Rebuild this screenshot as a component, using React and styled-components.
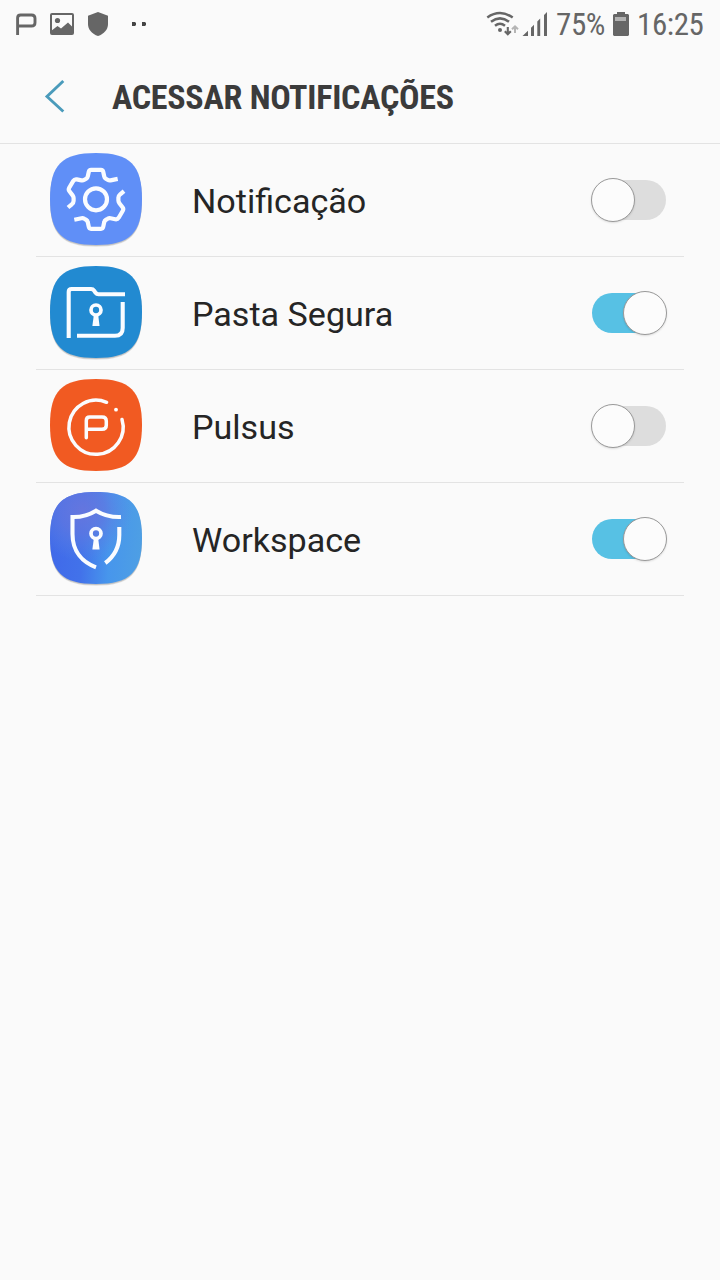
import React from "react";
import styled, { createGlobalStyle } from "styled-components";

const GlobalStyle = createGlobalStyle`
  * { box-sizing: border-box; }
  body { margin: 0; background: #fafafa; font-family: Roboto, "Liberation Sans", sans-serif; }
`;

const Screen = styled.main`
  width: 720px;
  min-height: 1280px;
  background: #fafafa;
`;

const StatusBar = styled.div`
  display: flex;
  justify-content: space-between;
  height: 48px;
  color: #666;
`;

const StatusGroup = styled.div`
  display: flex;
  height: 48px;
`;

const StatusText = styled.span`
  width: ${(p) => p.$width}px;
  font-family: "Roboto Condensed", Roboto, sans-serif;
  font-stretch: 75%;
  font-size: 31px;
  letter-spacing: -0.4px;
  line-height: 50px;
  white-space: nowrap;
`;

const Header = styled.header`
  display: flex;
  align-items: center;
  height: 96px;
  padding-left: 40px;
  border-bottom: 1px solid #e3e3e3;
`;

const BackButton = styled.button`
  display: flex;
  width: 72px;
  padding: 0;
  border: 0;
  background: none;
`;

const Title = styled.h1`
  margin: 0;
  padding-top: 3px;
  color: #3b3b3b;
  font-family: "Roboto Condensed", Roboto, sans-serif;
  font-stretch: 75%;
  font-size: 34px;
  font-weight: 700;
  letter-spacing: -0.25px;
  line-height: 44px;
  white-space: nowrap;
`;

const List = styled.ul`
  margin: 0 36px;
  padding: 0;
  list-style: none;
`;

const Row = styled.li`
  display: flex;
  height: 113px;
  padding: 0 17px 0 4px;
  border-bottom: 1px solid #e3e3e3;
`;

const AppIcon = styled.svg`
  flex: none;
  width: 112px;
  height: 112px;
  fill: none;
  stroke: #fafcff;
`;

const Label = styled.span`
  flex: 1;
  padding-left: 40px;
  color: #252525;
  font-size: 34.1px;
  line-height: 115px;
`;

const Switch = styled.button`
  display: flex;
  align-items: center;
  width: 76px;
  height: 44px;
  margin-top: 34px;
  padding: 0;
  border: 0;
  background: none;
`;

const Track = styled.span`
  display: flex;
  align-items: center;
  justify-content: ${(p) => (p.$on ? "flex-end" : "flex-start")};
  width: 74px;
  height: 40px;
  margin: 0 1px;
  border-radius: 20px;
  background: ${(p) => (p.$on ? "#57c1e4" : "#dddddd")};
`;

const Thumb = styled.span`
  flex: none;
  width: 44px;
  height: 44px;
  margin: 0 -1px;
  border: 1px solid #999;
  border-radius: 50%;
  background: #fcfcfc;
  box-shadow: 0 1px 2px rgba(0, 0, 0, 0.12);
`;

const Squircle = ({ fill, shadow = true }) => {
  const d = "M56 9C90 9 102 21 102 55S90 101 56 101 10 89 10 55 22 9 56 9Z";
  return (
    <g stroke="none">
      {shadow && <path d={d} transform="translate(0 1.8)" fill="#000" opacity=".1" />}
      {shadow && <path d={d} transform="translate(0 1)" fill="#000" opacity=".13" />}
      <path d={d} fill={fill} />
    </g>
  );
};

const Keyhole = ({ y }) => (
  <g transform={`translate(56 ${y})`}>
    <circle r="5" strokeWidth="3.7" />
    <path d="M-2.2 5H2.2L3.6 16H-3.6Z" fill="#fafcff" stroke="none" />
  </g>
);

const SettingsIcon = () => (
  <AppIcon viewBox="0 0 112 112">
    <Squircle fill="#608ff7" />
    <g strokeWidth="4.2" strokeLinejoin="round">
      <circle cx="56" cy="55.3" r="11" />
      <path
        id="teeth"
        d="M28 63.5L31.8 60.3Q33.6 58.7 33.6 57V54Q33.6 52.7 32.6 51.4L29.3 47Q28.2 45.5 29.2 43.8L33.3 36.9Q34.5 35 36.7 35.4L41.5 36.4Q43 36.7 44.4 35.8L46.2 34.7Q47.5 33.9 47.8 32.3L48.8 27.7Q49.2 25.8 51 25.8H61Q62.8 25.8 63.2 27.7L64.2 32.3Q64.5 33.9 65.8 34.7L67.6 35.8Q69 36.7 70.5 36.4L77.7 34.9"
      />
      <use href="#teeth" transform="rotate(180 56 55.3)" />
    </g>
  </AppIcon>
);

const FolderIcon = () => (
  <AppIcon viewBox="0 0 112 112">
    <Squircle fill="#228ad1" />
    <g strokeWidth="4.1">
      <path d="M28.7 81V35Q28.7 32 31.7 32H51Q53 32 54.1 33.6L55.6 35.8Q56.7 37.3 58.5 37.3H85" />
      <path d="M82.7 45V71Q82.7 78.8 75 78.8H37" />
    </g>
    <Keyhole y={53} />
  </AppIcon>
);

const PulsusIcon = () => (
  <AppIcon viewBox="0 0 112 112">
    <Squircle fill="#f15a22" shadow={false} />
    <g strokeWidth="3.5" strokeLinecap="round">
      <path d="M66.6 32.3A27.1 27.1 0 1 0 82 49.5" />
      <path d="M46.3 67.7V50.5Q46.3 47 49.8 47H62Q66.3 47 66.3 51.2V55.3Q66.3 59.3 62 59.3H47.5" />
    </g>
    <circle cx="76" cy="39.7" r="1.9" fill="#fff" stroke="none" />
  </AppIcon>
);

const WorkspaceIcon = () => (
  <AppIcon viewBox="0 0 112 112">
    <defs>
      <linearGradient id="blue" x1="0" y1=".5" x2="1" y2=".55">
        <stop offset="0" stopColor="#4069e9" />
        <stop offset=".35" stopColor="#4272ea" />
        <stop offset=".65" stopColor="#4796ec" />
        <stop offset="1" stopColor="#4e9fe4" />
      </linearGradient>
      <radialGradient id="violet" cx=".35" cy=".2" r=".55">
        <stop offset="0" stopColor="#6676de" stopOpacity=".95" />
        <stop offset=".45" stopColor="#6278e0" stopOpacity=".7" />
        <stop offset="1" stopColor="#5a86e5" stopOpacity="0" />
      </radialGradient>
    </defs>
    <Squircle fill="url(#blue)" />
    <Squircle fill="url(#violet)" shadow={false} />
    <g strokeWidth="4.1">
      <path d="M81 34Q67 34.5 56 27.7Q45.5 34.3 32.5 34V51C32.5 69 43 79.5 56 84.3" />
      <path d="M79.3 44V52Q79.3 69.5 65.3 80" />
    </g>
    <Keyhole y={50.5} />
  </AppIcon>
);

const NotificationIcons = () => (
  <svg width="160" height="48" viewBox="0 0 160 48" fill="none" stroke="#666">
    <path d="M17.6 35V18Q17.6 15 20.6 15H31.5Q35 15 35 18.3V22.7Q35 26 31.5 26H18" strokeWidth="2.9" />
    <rect x="51" y="14" width="22" height="20" rx="1" strokeWidth="2" />
    <circle cx="57.5" cy="20.5" r="2.6" fill="#666" stroke="none" />
    <path d="M51 31L57.5 26L61 28.5L68 22.5L73 27.5V34H51Z" fill="#666" stroke="none" />
    <path d="M98 12L108 15.7V24C108 29.5 104 34 98 36C92 34 88 29.5 88 24V15.7Z" fill="#666" stroke="none" />
    <path d="M132 22h3l1 1v2l-1 1h-3zM142 22h3l1 1v2l-1 1h-3z" fill="#444" stroke="none" />
  </svg>
);

const SignalIcons = () => (
  <svg width="70" height="48" viewBox="0 0 70 48" fill="none" stroke="#666">
    <g strokeWidth="2.5">
      <path d="M1.3 17.5Q14 8.7 26.7 17.5" />
      <path d="M5 21.7Q14 15 23 21.7" />
      <path d="M9 25.7Q14 21.7 19 25.7" />
    </g>
    <circle cx="14" cy="30" r="2" fill="#666" stroke="none" />
    <path d="M21.8 27V34M18.8 31.3L21.8 34.3L24.8 31.3" strokeWidth="2.1" />
    <path d="M29 33V26.5M26 29.3L29 26.3L32 29.3" stroke="#b5b5b5" strokeWidth="2" />
    <path d="M36.5 36L42 30.8V36ZM45 27.7L48 24.7V36H45ZM51.3 21.5L54.2 18.6V36H51.3ZM58 15L61 12V36H58Z" fill="#666" stroke="none" />
  </svg>
);

const BatteryIcon = () => (
  <svg width="33" height="48" viewBox="0 0 33 48">
    <path d="M13 12h8v2h3l1 1v20l-1 1H10l-1-1V15l1-1h3z" fill="#666" />
    <path d="M11 17h11v4H11z" fill="#b2b2b2" />
  </svg>
);

const apps = [
  { name: "Notificação", Icon: SettingsIcon, on: false },
  { name: "Pasta Segura", Icon: FolderIcon, on: true },
  { name: "Pulsus", Icon: PulsusIcon, on: false },
  { name: "Workspace", Icon: WorkspaceIcon, on: true },
];

export default function App() {
  return (
    <Screen>
      <GlobalStyle />
      <StatusBar>
        <StatusGroup><NotificationIcons /></StatusGroup>
        <StatusGroup>
          <SignalIcons />
          <StatusText $width={48}>75%</StatusText>
          <BatteryIcon />
          <StatusText $width={83}>16:25</StatusText>
        </StatusGroup>
      </StatusBar>
      <Header>
        <BackButton aria-label="Voltar">
          <svg width="28" height="40" viewBox="0 0 28 40" fill="none" stroke="#4a9bbb" strokeWidth="2.9">
            <path d="M23.3 5L7 20.5L23.3 35.5" />
          </svg>
        </BackButton>
        <Title>ACESSAR NOTIFICAÇÕES</Title>
      </Header>
      <List>
        {apps.map(({ name, Icon, on }) => (
          <Row key={name}>
            <Icon />
            <Label>{name}</Label>
            <Switch role="switch" aria-checked={on} aria-label={name}>
              <Track $on={on}><Thumb /></Track>
            </Switch>
          </Row>
        ))}
      </List>
    </Screen>
  );
}
